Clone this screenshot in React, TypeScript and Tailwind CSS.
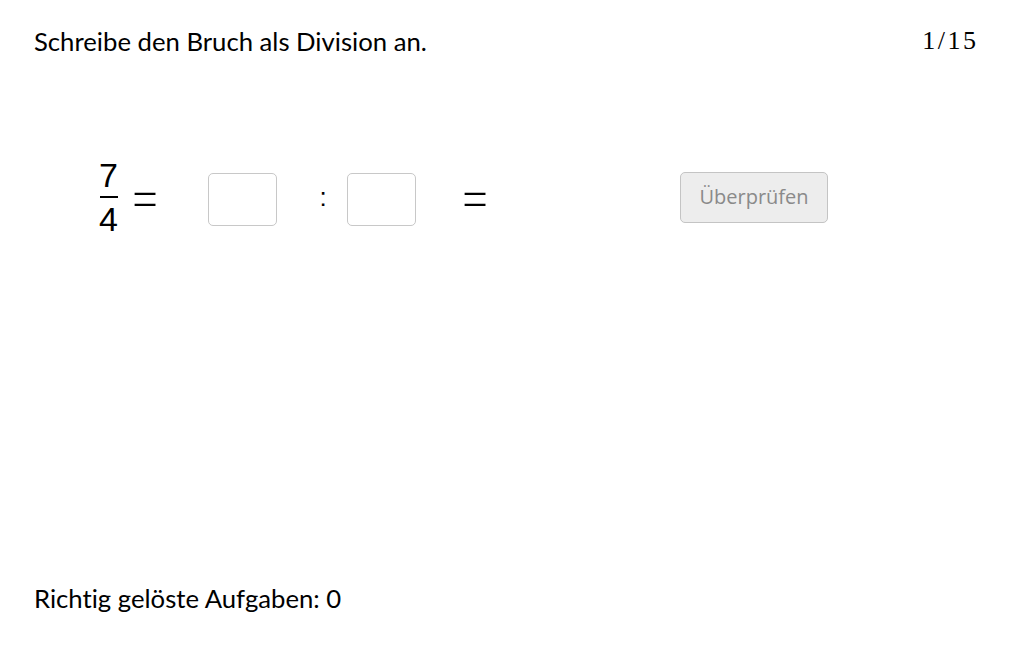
export default function App() {
  return (
    <div className="h-[645px] w-[1032px] bg-white text-black flex flex-col font-['Lato',sans-serif] [font-variant-ligatures:none]">
      {/* Header */}
      <div className="flex items-start justify-between pl-[34px] pr-[56px] pt-[25px]">
        <span className="text-[25.7px] leading-[32px]">Schreibe den Bruch als Division an.</span>
        <span className="text-[26px] leading-[32px] tracking-[2.5px] mr-[-2.5px] font-['Liberation_Serif',serif]">1/15</span>
      </div>

      {/* Aufgabe */}
      <div className="flex items-center pl-[99px] mt-[95px] h-[90px]">
        <div className="flex flex-col items-center w-[19px] font-['Liberation_Sans',sans-serif] text-[34px] leading-none">
          <span className="leading-[36px]">7</span>
          <div className="h-[2px] w-[18px] bg-black my-[3px]" />
          <span className="leading-[36px]">4</span>
        </div>
        <span className="ml-[15px] w-[24px] flex justify-center text-[56px] font-['Inter',sans-serif] font-extralight leading-none mt-[-4px]">=</span>
        <input className="ml-[51px] mt-[4px] w-[69px] h-[53px] border border-[#c8c8c8] rounded-[5px] outline-none" />
        <span className="ml-[42px] w-[8px] flex justify-center text-[26px] font-['Liberation_Sans',sans-serif]">:</span>
        <input className="ml-[20px] mt-[4px] w-[69px] h-[53px] border border-[#c8c8c8] rounded-[5px] outline-none" />
        <span className="ml-[47px] w-[24px] flex justify-center text-[56px] font-['Inter',sans-serif] font-extralight leading-none mt-[-4px]">=</span>
        <button className="ml-[193px] w-[148px] h-[51px] bg-[#ededed] border border-[#c4c4c4] rounded-[5px] text-[#8a8a8a] text-[20px] font-['Open_Sans',sans-serif]">
          Überprüfen
        </button>
      </div>

      <div className="flex-1" />

      {/* Fortschritt */}
      <div className="pl-[34px] pb-[31px]">
        <span className="text-[25.7px] leading-[32px]">Richtig gelöste Aufgaben: 0</span>
      </div>
    </div>
  );
}
